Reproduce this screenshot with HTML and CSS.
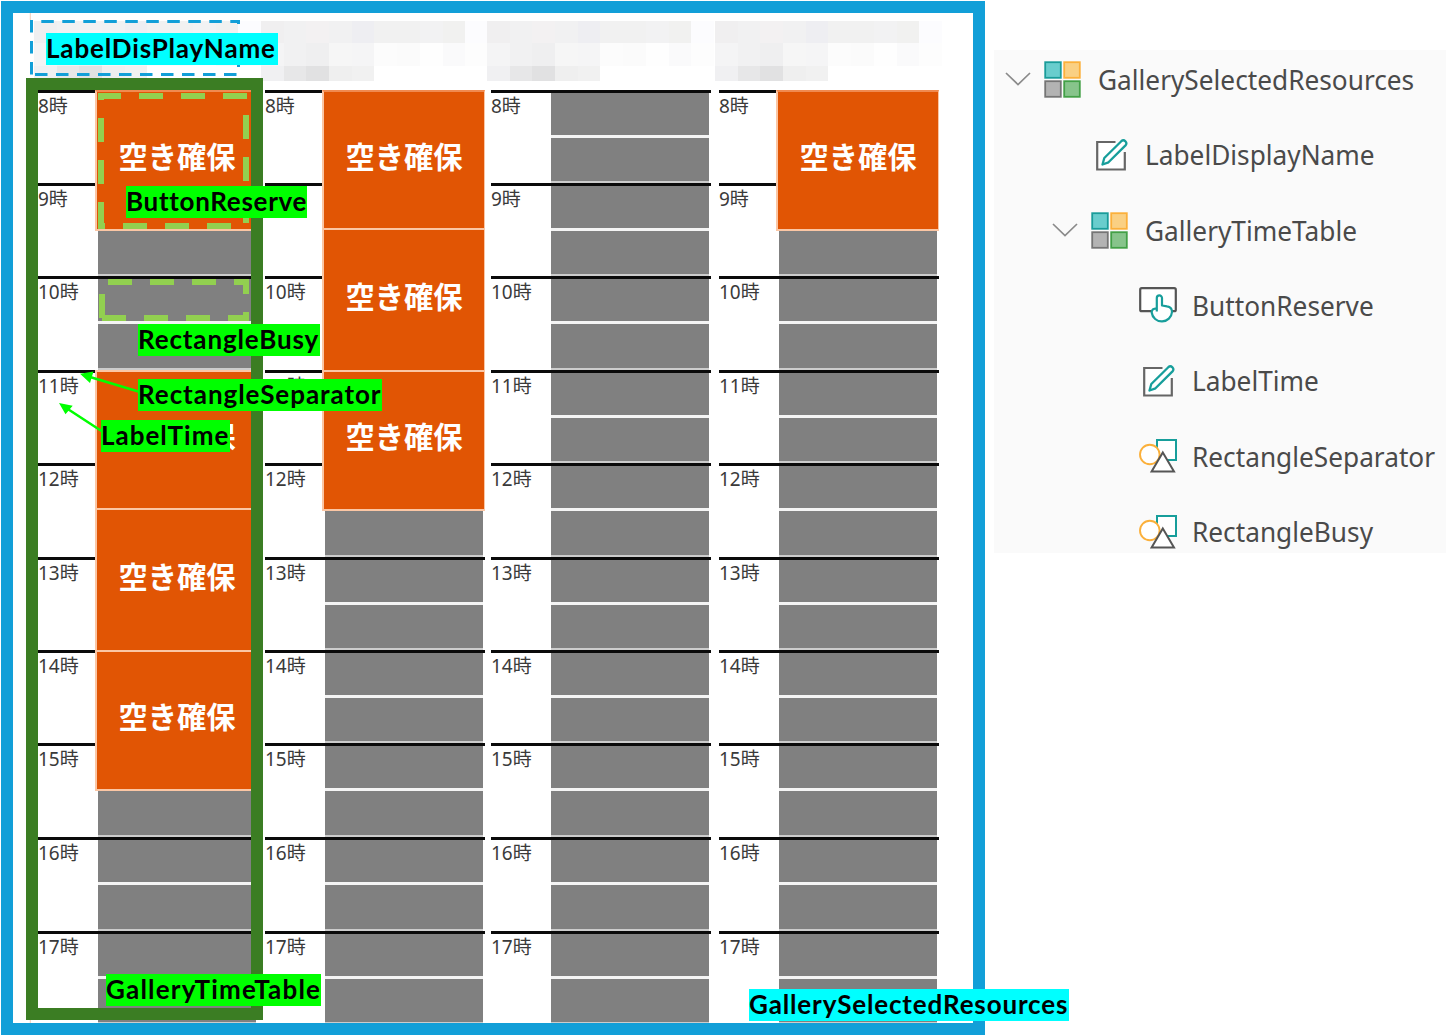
FILE: index.html
```html
<!DOCTYPE html>
<html lang="ja">
<head>
    <meta charset="UTF-8">
    <meta name="viewport" content="width=device-width, initial-scale=1.0">
    <title>GallerySelectedResources</title>
    <link rel="stylesheet" href="styles.css">
</head>
<body>
    <svg class="defs" width="0" height="0">
        <symbol id="chevron" viewBox="0 0 26 16">
            <path d="M1 2 L13 13.5 L25 2" fill="none" stroke="#8a8a8a" stroke-width="1.7"/>
        </symbol>
        <symbol id="gallery" viewBox="0 0 37 37">
            <g stroke-width="1.8">
                <rect x="1.2" y="1.2" width="15.6" height="15.6" fill="#69cdcd" stroke="#1a9c9a"/>
                <rect x="20.2" y="1.2" width="15.6" height="15.6" fill="#fad083" stroke="#fbb03b"/>
                <rect x="1.2" y="20.2" width="15.6" height="15.6" fill="#b3b3b3" stroke="#757575"/>
                <rect x="20.2" y="20.2" width="15.6" height="15.6" fill="#87c48b" stroke="#43a047"/>
            </g>
        </symbol>
        <symbol id="label" viewBox="0 0 34 34">
            <path d="M20.5 4H2.2V31.5H29.8V14" fill="#fff" stroke="#666" stroke-width="2.2"/>
            <path d="M7.5 26.5L9.3 20L26.3 3.2Q28.4 1.4 30.4 3.3Q32.3 5.3 30.5 7.4L13.5 24.3Z" fill="#fff" stroke="#179e9b" stroke-width="2.3" stroke-linejoin="round"/>
        </symbol>
        <symbol id="button" viewBox="0 0 38 38">
            <rect x="1.2" y="2.2" width="35.6" height="23" rx="1.5" fill="#fff" stroke="#555" stroke-width="2.2"/>
            <path d="M17.8 25.5V12A2.6 2.6 0 0 1 23 12V19.5L28 20.3Q33.2 21 33 26A10.2 10.2 0 0 1 12.7 26.5Q12.5 22.5 17.8 22.3" fill="#fff" stroke="#179e9b" stroke-width="2.2" stroke-linejoin="round"/>
        </symbol>
        <symbol id="shape" viewBox="0 0 38 36">
            <rect x="18" y="2" width="19" height="20" fill="#fff" stroke="#179e9b" stroke-width="2"/>
            <circle cx="10.8" cy="16.5" r="9.8" fill="#fff" stroke="#fbb03b" stroke-width="1.9"/>
            <path d="M23.8 14.5L35 33.5H12.6Z" fill="#fff" stroke="#555" stroke-width="2"/>
        </symbol>
    </svg>

    <div class="page">
        <main class="board" id="board"></main>

        <aside class="tree">
            <div class="node level0">
                <svg class="chevron"><use href="#chevron"/></svg>
                <svg class="icon gallery"><use href="#gallery"/></svg>
                <span>GallerySelectedResources</span>
            </div>
            <div class="node level1">
                <svg class="icon label"><use href="#label"/></svg>
                <span>LabelDisplayName</span>
            </div>
            <div class="node level1 parent">
                <svg class="chevron"><use href="#chevron"/></svg>
                <svg class="icon gallery"><use href="#gallery"/></svg>
                <span>GalleryTimeTable</span>
            </div>
            <div class="node level2">
                <svg class="icon button"><use href="#button"/></svg>
                <span>ButtonReserve</span>
            </div>
            <div class="node level2">
                <svg class="icon label"><use href="#label"/></svg>
                <span>LabelTime</span>
            </div>
            <div class="node level2">
                <svg class="icon shape"><use href="#shape"/></svg>
                <span>RectangleSeparator</span>
            </div>
            <div class="node level2">
                <svg class="icon shape"><use href="#shape"/></svg>
                <span>RectangleBusy</span>
            </div>
        </aside>
    </div>

    <!-- frames, dashed outlines and arrows over the timetable -->
    <div class="time-frame"></div>
    <svg class="marks" width="1446" height="1036">
        <path d="M30.3 13V20M30.3 1020V1023" stroke="#f3cdb8" stroke-width="1"/>
        <g stroke="#129fd8" stroke-width="3" stroke-dasharray="12.5 8.5">
            <path d="M41.3 21.5H240"/>
            <path d="M31.5 20V76" />
            <path d="M35 74.5H240"/>
            <path d="M238.5 20V24M238.5 62V67" stroke-dasharray="none"/>
        </g>
        <g stroke="#92d050" stroke-width="6" stroke-dasharray="24 18">
            <path d="M98 96H249" stroke-dashoffset="1"/>
            <path d="M101 93V100" stroke-dasharray="none"/>
            <path d="M101 118V229"/>
            <path d="M246 115V223"/>
            <path d="M98 226H105" stroke-dasharray="none"/>
            <path d="M123 226H232"/>
            <path d="M108 282H249"/>
            <path d="M102 318H249"/>
            <path d="M102 294V318M246 279V294M246 312V321" stroke-dasharray="none"/>
        </g>
        <g stroke="#0f0" stroke-width="2.5" fill="#0f0">
            <path d="M140 392L90 377M103 432L67 408.5"/>
            <path d="M80 373.7L93.5 371.5L90 383Z M59 403L72.7 405.7L65.5 414.3Z" stroke="none"/>
        </g>
    </svg>
    <span class="tag cyan tag-name">LabelDisPlayName</span>
    <span class="tag tag-reserve">ButtonReserve</span>
    <span class="tag tag-busy">RectangleBusy</span>
    <span class="tag tag-separator">RectangleSeparator</span>
    <span class="tag tag-time">LabelTime</span>
    <span class="tag tag-table">GalleryTimeTable</span>
    <span class="tag cyan tag-resources">GallerySelectedResources</span>

    <script>
        // each start is a half-hour index from 8:00, a reservation takes 3 of them
        const resources = [[0, 6, 9, 12], [0, 3, 6], [], [0]];

        // blurred resource names
        const mosaic = [
            "#f0eff0", "#f1f1f2", "#f3f1f2", "#f1f1f2", "#eeeef2", "#f1f1f1", "#f1f1f1", "#f2f2f3", "#f1f1f0", "#fcfcfe",
            "#f4f4f5", "#f1f1f2", "#efeff0", "#f6f6f6", "#f5f5f6", "#fcfcfc", "#fbfbfb", "#fefefe", "#fafafb", "#fdfdfd",
            "#f0f0f2", "#e7e7e8", "#e1e1e2", "#efefef", "#f1f1f1"
        ];

        const board = document.getElementById("board");
        resources.forEach(starts => {
            let cells = "";
            for (let i = 0; i < 20; i++) {
                const hour = 8 + i / 2;
                if (i % 2 === 0) {
                    cells += `<div class="time" style="grid-row: ${i + 1} / span 2">${hour}時</div>`;
                }
                cells += `<div class="busy ${i % 2 ? 'half' : 'full'}" style="grid-row: ${i + 1}"></div>`;
            }
            starts.forEach(s => {
                cells += `<div class="reserve" style="grid-row: ${s + 1} / span 3">空き確保</div>`;
            });
            board.innerHTML += `
                <section class="resource">
                    <div class="name">${mosaic.map(c => `<i style="background: ${c}"></i>`).join("")}</div>
                    <div class="timetable">${cells}</div>
                </section>`;
        });
    </script>
</body>
</html>
```

FILE: styles.css
```css
* {
    box-sizing: border-box;
}
body {
    margin: 0;
    position: relative;
    height: 1036px;
    overflow: hidden;
    background: #fff;
    font-family: "Noto Sans", "Noto Sans CJK JP", sans-serif;
}
.defs {
    position: absolute;
}
.page {
    display: flex;
    align-items: flex-start;
    padding: 1px 0 0 1px;
}
.board {
    display: flex;
    flex: none;
    gap: 7px;
    width: 984px;
    height: 1034px;
    padding: 8px 0 0 25px;
    border: 12px solid #129fd8;
    overflow: hidden;
}
.resource {
    flex: none;
    width: 220px;
}
.resource:nth-child(3) {
    margin: 0 1px 0 -1px;
}
.name {
    display: grid;
    grid-template-columns: repeat(10, 22.7px);
    grid-template-rows: 22px 23px 15px;
    margin: 0 0 9px -4px;
}
.timetable {
    display: grid;
    grid-template-columns: 58px 162px;
    grid-template-rows: 45px 48px 45px 48px 45px 49px 45px 48px 45px 49px 45px 48px 45px 48px 45px 49px 45px 49px 45px 48px;
}
.time {
    grid-column: 1;
    margin-right: 1px;
    padding-top: 1px;
    border-top: 3px solid #0a0a0a;
    font-size: 19px;
    line-height: 24px;
    color: #3a3a3a;
    white-space: nowrap;
}
.busy {
    grid-column: 2;
    margin: 0 2px 0 1.5px;
    background: #808080;
}
.busy.full {
    border-top: 3px solid #0a0a0a;
    margin: 0 0 0 -1px;
    padding: 0 2px 0 2.5px;
    background-clip: content-box;
}
.busy.half {
    border-top: 3px solid #f4f4f4;
    border-bottom: 2px solid #ccc;
}
.reserve {
    grid-column: 2;
    display: flex;
    align-items: center;
    justify-content: center;
    margin: 0 0 -3px -1px;
    padding-bottom: 10px;
    border: 2px solid #fbc6a4;
    border-top-color: #f08a50;
    border-right-width: 1px;
    background: #e15504;
    color: #fff;
    font-size: 29.3px;
    font-weight: bold;
}
.reserve + .reserve {
    border-top-color: #fbc6a4;
}
.tree {
    width: 452px;
    height: 503px;
    margin: 49px 0 0 9px;
    background: #fafafa;
    color: #4a4a4a;
    font-size: 28px;
}
.node {
    display: flex;
    align-items: center;
    height: 75.4px;
    white-space: nowrap;
}
.node:first-child {
    height: 58px;
    margin-bottom: 9px;
}
.node svg {
    flex: none;
}
.node span {
    padding-bottom: 1px;
    transform: scaleX(0.937);
    transform-origin: left;
}
.level0 { padding-left: 11px; }
.level1 { padding-left: 101px; }
.level1.parent { padding-left: 58px; }
.level2 { padding-left: 145px; }
.chevron {
    width: 26px;
    height: 16px;
    margin-right: 13px;
}
.icon.gallery {
    width: 37px;
    height: 37px;
    margin-right: 17px;
}
.icon.label {
    width: 34px;
    height: 34px;
    margin-right: 16px;
}
.level2 .icon.label {
    margin-left: 3px;
    margin-right: 16px;
}
.icon.button, .icon.shape {
    width: 38px;
    height: 38px;
    margin-right: 15px;
}
.time-frame {
    position: absolute;
    left: 26px;
    top: 78px;
    width: 237px;
    height: 942px;
    border: 12px solid #3b7d23;
}
.marks {
    position: absolute;
    left: 0;
    top: 0;
    fill: none;
}
.tag {
    position: absolute;
    height: 32px;
    background: #0f0;
    color: #000;
    font-family: Lato, "Noto Sans CJK JP", sans-serif;
    font-size: 26px;
    font-weight: bold;
    letter-spacing: 0.85px;
    line-height: 31px;
    white-space: nowrap;
}
.cyan { background: #0ff; }
.tag-name { left: 46px; top: 33px; width: 232px; }
.tag-reserve { left: 126px; top: 186px; width: 181px; letter-spacing: 0.7px; }
.tag-busy { left: 138px; top: 324px; width: 182px; }
.tag-separator { left: 138px; top: 379px; width: 244px; letter-spacing: 0.95px; }
.tag-time { left: 101px; top: 420px; width: 129px; letter-spacing: 1px; }
.tag-table { left: 106px; top: 974px; width: 215px; letter-spacing: 1.2px; }
.tag-resources { left: 749px; top: 989px; width: 320px; }
```
